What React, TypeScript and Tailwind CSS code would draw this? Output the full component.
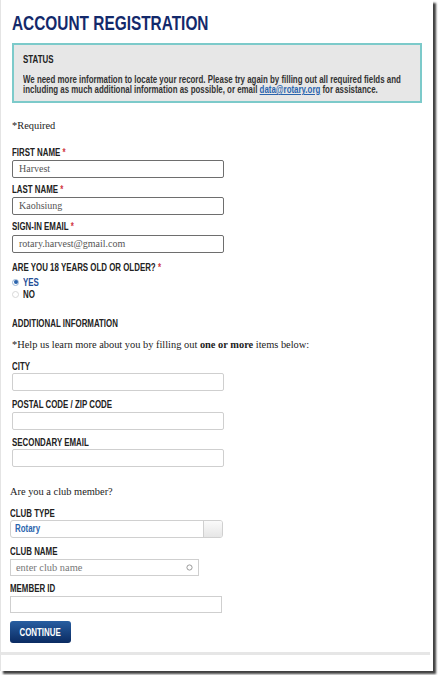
import React from "react";

const sans = "font-['Liberation_Sans',Arial,sans-serif]";
const serif = "font-['Liberation_Serif','Times_New_Roman',serif]";
// the reference uses a condensed face; squeeze Liberation Sans to match
const narrow = "inline-block origin-left scale-x-[0.79] whitespace-nowrap";

const Label = ({ text, req, className = "" }: { text: string; req?: boolean; className?: string }) => (
  <div className={`${sans} h-[12px] text-[10px] leading-[12px] font-bold text-[#222] ${className}`}>
    <span className={narrow}>
      {text}
      {req && <span className="text-[#d0353f]"> *</span>}
    </span>
  </div>
);

const Field = ({ value, dark, className = "" }: { value?: string; dark?: boolean; className?: string }) => (
  <div
    className={`w-[212px] h-[18px] rounded-[2px] bg-white px-[6px] ${serif} text-[10px] leading-[16px] text-[#555] border ${
      dark ? "border-[#6e6e6e]" : "border-[#cfcfcf]"
    } ${className}`}
  >
    {value}
  </div>
);

export default function App() {
  return (
    <div className="min-h-screen bg-white">
      <div className="w-[433px] h-[671px] bg-white border-l border-[#e4e4e4] shadow-[3px_3px_2px_rgba(0,0,0,0.75)] overflow-hidden">
        <div className="pl-[11px] pr-[11px] pt-[10px]">
          <h1 className={`${sans} h-[26px] text-[20px] leading-[26px] font-bold text-[#13296b]`}>
            <span className="inline-block origin-left scale-x-[0.77] whitespace-nowrap">ACCOUNT REGISTRATION</span>
          </h1>

          <div className="mt-[7px] h-[60px] bg-[#e7e7e7] border-2 border-[#7ccaca] px-[9px] pt-[9px]">
            <div className={`${sans} h-[12px] text-[10px] leading-[12px] font-bold text-[#222]`}>
              <span className={narrow}>STATUS</span>
            </div>
            <p className={`${sans} ${narrow} mt-[9px] text-[10px] leading-[10px] font-bold text-[#333]`}>
              We need more information to locate your record. Please try again by filling out all required fields and
              <br />
              including as much additional information as possible, or email{" "}
              <span className="text-[#2a64ad] underline">data@rotary.org</span> for assistance.
            </p>
          </div>

          <div className={`${serif} mt-[17px] text-[10.4px] leading-[12px] text-[#222]`}>*Required</div>

          <Label text="FIRST NAME" req className="mt-[15px]" />
          <Field value="Harvest" dark className="mt-[1px]" />
          <Label text="LAST NAME" req className="mt-[6px]" />
          <Field value="Kaohsiung" dark className="mt-[1px]" />
          <Label text="SIGN-IN EMAIL" req className="mt-[6px]" />
          <Field value="rotary.harvest@gmail.com" dark className="mt-[2px]" />

          <Label text="ARE YOU 18 YEARS OLD OR OLDER?" req className="mt-[9px]" />
          <div className="mt-[2px] flex items-center gap-[4px] h-[12px]">
            <span className="w-[7px] h-[7px] rounded-full border border-[#9bb6d6] bg-white flex items-center justify-center">
              <span className="w-[4px] h-[4px] rounded-full bg-[#2a64ad]" />
            </span>
            <span className={`${sans} ${narrow} text-[10px] font-bold text-[#1f4e96]`}>YES</span>
          </div>
          <div className="flex items-center gap-[4px] h-[12px]">
            <span className="w-[7px] h-[7px] rounded-full border border-[#d8d8d8] bg-white" />
            <span className={`${sans} ${narrow} text-[10px] font-bold text-[#222]`}>NO</span>
          </div>

          <Label text="ADDITIONAL INFORMATION" className="mt-[18px]" />
          <div className={`${serif} mt-[9px] text-[10.4px] leading-[12px] text-[#222]`}>
            *Help us learn more about you by filling out <b>one or more</b> items below:
          </div>

          <Label text="CITY" className="mt-[10px]" />
          <Field className="mt-[0px]" />
          <Label text="POSTAL CODE / ZIP CODE" className="mt-[8px]" />
          <Field className="mt-[1px]" />
          <Label text="SECONDARY EMAIL" className="mt-[7px]" />
          <Field className="mt-[0px]" />
        </div>

        <div className="pl-[9px]">
          <div className={`${serif} mt-[19px] text-[10.4px] leading-[12px] text-[#222]`}>Are you a club member?</div>

          <Label text="CLUB TYPE" className="mt-[10px]" />
          <div className="mt-[0px] w-[213px] h-[18px] rounded-[3px] border border-[#d0d0d0] bg-white flex overflow-hidden">
            <div className={`${sans} flex-1 pl-[4px] text-[10px] leading-[16px] font-bold text-[#2a64ad]`}>
              <span className={narrow}>Rotary</span>
            </div>
            <div className="w-[19px] border-l border-[#d0d0d0] bg-gradient-to-b from-[#fafafa] to-[#e6e6e6]" />
          </div>

          <Label text="CLUB NAME" className="mt-[8px]" />
          <div className="mt-[1px] w-[189px] h-[17px] border border-[#cfcfcf] bg-white flex items-center justify-between px-[5px]">
            <span className={`${serif} text-[10.4px] leading-[15px] text-[#777]`}>enter club name</span>
            <svg width="7" height="7" viewBox="0 0 7 7">
              <circle cx="3.5" cy="3.5" r="2.6" fill="none" stroke="#9a9a9a" strokeWidth="1" />
            </svg>
          </div>

          <Label text="MEMBER ID" className="mt-[7px]" />
          <div className="mt-[1px] w-[212px] h-[17px] border border-[#cfcfcf] bg-white" />

          <button
            className={`${sans} mt-[8px] w-[61px] h-[22px] rounded-[3px] bg-gradient-to-b from-[#285ea1] to-[#0b2b62] text-white text-[10px] font-bold flex items-center justify-center`}
          >
            <span className="inline-block scale-x-[0.79] whitespace-nowrap">CONTINUE</span>
          </button>
        </div>

        <div className="mt-[9px] w-[429px] h-[3px] bg-[#e6e6e6]" />
      </div>
    </div>
  );
}
